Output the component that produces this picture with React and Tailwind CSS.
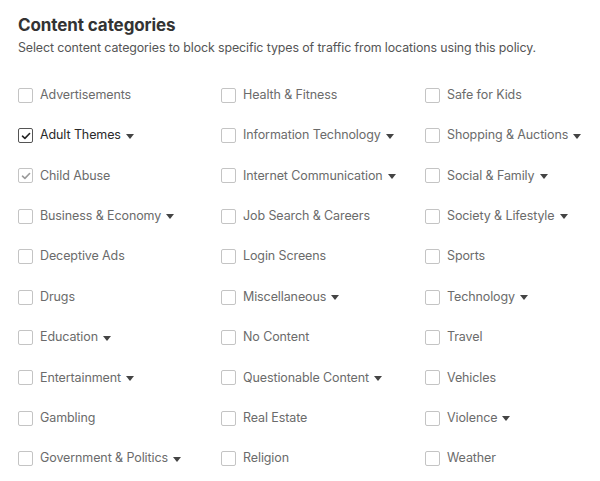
import React from "react";

const columns = [
  [
    { label: "Advertisements" },
    { label: "Adult Themes", checked: true, menu: true },
    { label: "Child Abuse", checked: true, locked: true },
    { label: "Business & Economy", menu: true },
    { label: "Deceptive Ads" },
    { label: "Drugs" },
    { label: "Education", menu: true },
    { label: "Entertainment", menu: true },
    { label: "Gambling" },
    { label: "Government & Politics", menu: true },
  ],
  [
    { label: "Health & Fitness" },
    { label: "Information Technology", menu: true },
    { label: "Internet Communication", menu: true },
    { label: "Job Search & Careers" },
    { label: "Login Screens" },
    { label: "Miscellaneous", menu: true },
    { label: "No Content" },
    { label: "Questionable Content", menu: true },
    { label: "Real Estate" },
    { label: "Religion" },
  ],
  [
    { label: "Safe for Kids" },
    { label: "Shopping & Auctions", menu: true },
    { label: "Social & Family", menu: true },
    { label: "Society & Lifestyle", menu: true },
    { label: "Sports" },
    { label: "Technology", menu: true },
    { label: "Travel" },
    { label: "Vehicles" },
    { label: "Violence", menu: true },
    { label: "Weather" },
  ],
];

const Check = ({ color }) => (
  <svg width="10" height="8" viewBox="0 0 10 8" fill="none">
    <path d="M1.5 4.2 L3.9 6.4 L8.6 1.5" stroke={color} strokeWidth="1.6" strokeLinecap="round" strokeLinejoin="round" />
  </svg>
);

const Caret = () => (
  <svg width="8" height="5" viewBox="0 0 8 5" className="ml-[5px] mt-[1px] shrink-0">
    <path d="M0 0 H8 L4 5 Z" fill="#444" />
  </svg>
);

const Category = ({ label, checked, locked, menu }) => {
  const box = checked && !locked ? "border-[#555]" : "border-[#c4c4c4]";
  const text = checked && !locked ? "text-[#2a2a2a]" : "text-[#6b6b6b]";
  return (
    <label className="flex items-center h-[40.4px] cursor-pointer whitespace-nowrap">
      <span className={`w-[15px] h-[15px] rounded-[2px] border bg-white flex items-center justify-center shrink-0 ${box}`}>
        {checked && <Check color={locked ? "#9a9a9a" : "#222"} />}
      </span>
      <span className={`ml-[7px] text-[12.5px] tracking-[-0.1px] ${text}`}>{label}</span>
      {menu && <Caret />}
    </label>
  );
};

export default function App() {
  return (
    <div className="w-[600px] h-[481px] bg-white px-[18px] pt-[14px] overflow-hidden" style={{ fontFamily: "Inter, 'Noto Sans', sans-serif" }}>
      <h2 className="text-[17px] font-bold text-[#333] leading-[22px] tracking-[-0.1px]">Content categories</h2>
      <p className="text-[12.4px] text-[#555] leading-[18px] mt-[3px] tracking-[-0.1px]">
        Select content categories to block specific types of traffic from locations using this policy.
      </p>
      <div className="grid grid-cols-[203px_204px_1fr] mt-[18px]">
        {columns.map((col, i) => (
          <div key={i} className="flex flex-col">
            {col.map((c) => (
              <Category key={c.label} {...c} />
            ))}
          </div>
        ))}
      </div>
    </div>
  );
}
